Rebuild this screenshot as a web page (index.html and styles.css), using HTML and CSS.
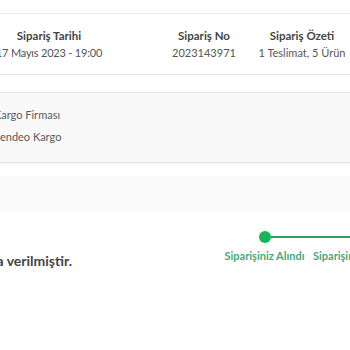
FILE: index.html
```html
<!DOCTYPE html>
<html lang="tr">
<head>
<meta charset="utf-8">
<link rel="stylesheet" href="styles.css">
</head>
<body>
<div class="page">
  <div class="summary">
    <div class="col col1">
      <div class="head">Sipariş Tarihi</div>
      <div class="val">17 Mayıs 2023 - 19:00</div>
    </div>
    <div class="col col2">
      <div class="head">Sipariş No</div>
      <div class="val">2023143971</div>
    </div>
    <div class="col col3">
      <div class="head">Sipariş Özeti</div>
      <div class="val">1 Teslimat, 5 Ürün</div>
    </div>
  </div>
  <div class="strip"></div>
  <div class="cargo">
    <div class="cargo-label">Kargo Firması</div>
    <div class="cargo-name">Sendeo Kargo</div>
  </div>
  <div class="gap"></div>
  <div class="band"></div>
  <div class="track">
    <div class="msg"><span>Siparişiniz kargoya verilmiştir.</span></div>
    <div class="steps">
      <div class="dots">
        <span class="dot"></span>
        <span class="line"></span>
      </div>
      <div class="labels">
        <span class="label l1">Siparişiniz Alındı</span>
        <span class="label">Siparişiniz Hazırlanıyor</span>
      </div>
    </div>
  </div>
</div>
</body>
</html>
```
FILE: styles.css
```css
html, body {
  margin: 0;
  padding: 0;
  background: #fff;
  overflow: hidden;
}
body {
  width: 350px;
  height: 350px;
  font-family: "Lato", "Noto Sans", sans-serif;
  color: #555;
}
.page {
  padding-top: 13px;
}
.summary {
  display: flex;
  border-top: 1px solid #ececec;
  border-bottom: 1px solid #e6e6e6;
  padding: 14px 0 13px;
}
.col {
  display: flex;
  flex-direction: column;
  align-items: center;
  white-space: nowrap;
  flex: none;
}
.col1 { width: 98px; }
.col2 { width: 96px; margin-left: 58px; }
.col3 { width: 92px; margin-left: 4px; }
.head {
  font-size: 11.5px;
  font-weight: 700;
  line-height: 16px;
  color: #444;
}
.val {
  font-size: 11px;
  line-height: 16px;
  margin-top: 1px;
  color: #555;
}
.col1 .val {
  letter-spacing: -0.2px;
}
.strip {
  height: 17px;
  border-bottom: 1px solid #e6e6e6;
}
.cargo {
  background: #f9f9f9;
  padding: 14px 0 17px;
  margin-left: -6px;
  border-bottom: 1px solid #e4e4e4;
  box-shadow: 0 1px 2px rgba(0,0,0,0.06);
  font-size: 11px;
  line-height: 16px;
  color: #5a5a5a;
}
.cargo-name {
  margin-top: 6px;
}
.gap {
  height: 13px;
}
.band {
  height: 36px;
  background: #fafafa;
}
.track {
  display: flex;
  margin-top: 19px;
}
.msg {
  width: 72px;
  flex: none;
  display: flex;
  justify-content: flex-end;
  padding-top: 20px;
  white-space: nowrap;
  font-size: 14px;
  font-weight: 700;
  line-height: 19px;
  color: #444;
}
.steps {
  margin-left: 152px;
  flex: 1;
  overflow: hidden;
}
.dots {
  display: flex;
  align-items: center;
  padding-left: 35px;
  height: 12px;
}
.dot {
  width: 12px;
  height: 12px;
  border-radius: 50%;
  background: #16b558;
  flex: none;
}
.line {
  flex: 1;
  height: 2px;
  background: #2e9f60;
}
.labels {
  display: flex;
  gap: 8px;
  margin-top: 5px;
  white-space: nowrap;
}
.label {
  font-size: 11px;
  font-weight: 700;
  line-height: 16px;
  color: #47a974;
}
.l1 {
  width: 81px;
  display: flex;
  justify-content: center;
  flex: none;
}
```
